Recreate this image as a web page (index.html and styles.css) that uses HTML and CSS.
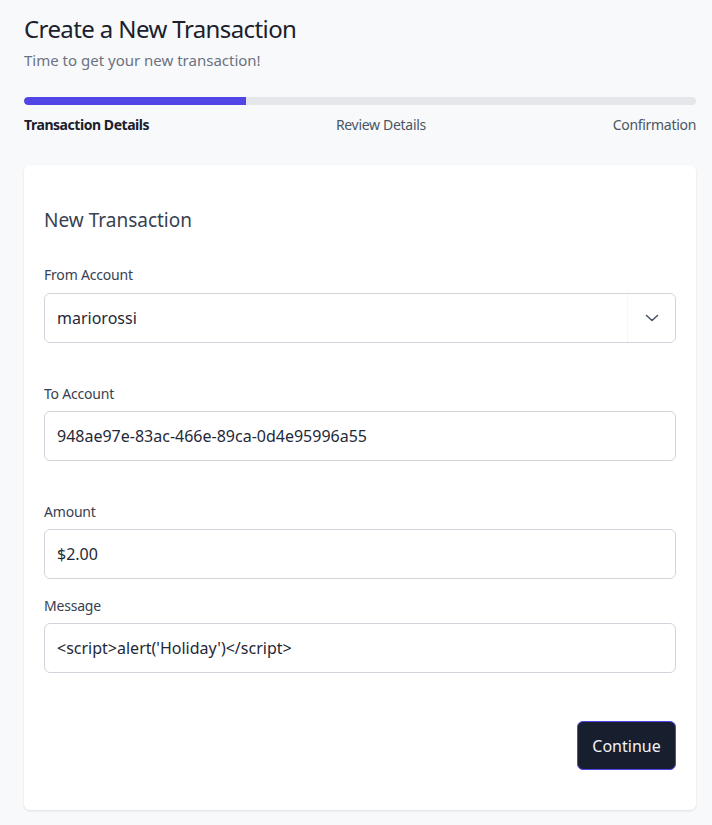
FILE: index.html
```html
<!DOCTYPE html>
<html>
<head>
<meta charset="utf-8">
<link rel="stylesheet" href="styles.css">
</head>
<body>
<main class="page">
  <header class="head">
    <h1 class="title">Create a New Transaction</h1>
    <p class="subtitle">Time to get your new transaction!</p>
  </header>
  <div class="progress"><div class="progress-fill" style="width:33%"></div></div>
  <div class="steps">
    <span class="step active">Transaction Details</span>
    <span class="step">Review Details</span>
    <span class="step">Confirmation</span>
  </div>
  <section class="card">
    <h2 class="card-title">New Transaction</h2>
    <div class="field gap-lg">
      <label class="label">From Account</label>
      <div class="select">
        <span class="select-value">mariorossi</span>
        <span class="select-arrow">
          <svg width="16" height="16" viewBox="0 0 16 16" fill="none" stroke="#4b5563" stroke-width="1.6" stroke-linecap="round" stroke-linejoin="round"><path d="M2.5 5.5 8 10.5 13.5 5.5"/></svg>
        </span>
      </div>
    </div>
    <div class="field gap-lg">
      <label class="label">To Account</label>
      <div class="input">948ae97e-83ac-466e-89ca-0d4e95996a55</div>
    </div>
    <div class="field gap-sm">
      <label class="label">Amount</label>
      <div class="input">$2.00</div>
    </div>
    <div class="field">
      <label class="label">Message</label>
      <div class="input">&lt;script&gt;alert('Holiday')&lt;/script&gt;</div>
    </div>
    <div class="actions">
      <button class="btn">Continue</button>
    </div>
  </section>
</main>
</body>
</html>
```
FILE: styles.css
```css
* { box-sizing: border-box; }
html, body { margin: 0; padding: 0; }
body {
  background: #f8f9fb;
  font-family: "Noto Sans", "Open Sans", sans-serif;
  color: #1f2937;
}
.page { padding: 14px 16px 14px 24px; }
.head { margin: 0; }
.title {
  margin: 0;
  font-size: 24px;
  font-weight: 400;
  line-height: 30px;
  letter-spacing: -0.6px;
  color: #1a202c;
}
.subtitle {
  margin: 6px 0 0;
  font-size: 15px;
  line-height: 20px;
  color: #6b7280;
}
.progress {
  margin-top: 27px;
  height: 8px;
  border-radius: 4px;
  background: #e5e7eb;
  overflow: hidden;
}
.progress-fill { height: 100%; background: #4f46e5; border-radius: 4px 0 0 4px; }
.steps {
  display: flex;
  justify-content: space-between;
  margin-top: 10px;
  font-size: 14px;
  line-height: 20px;
  letter-spacing: -0.3px;
  color: #4b5563;
}
.step.active { font-weight: 700; color: #1a202c; letter-spacing: -0.45px; }
.card {
  margin-top: 30px;
  background: #fff;
  border-radius: 6px;
  box-shadow: 0 1px 3px rgba(0,0,0,0.08), 0 1px 2px rgba(0,0,0,0.04);
  padding: 41px 20px 40px 20px;
}
.card-title {
  margin: 0 0 31px;
  font-size: 19px;
  font-weight: 400;
  line-height: 28px;
  color: #374151;
}
.field { display: flex; flex-direction: column; margin-bottom: 17px; }
.field.gap-lg { margin-bottom: 41px; }
.field.gap-sm { margin-bottom: 17px; }
.label {
  font-size: 14px;
  line-height: 20px;
  letter-spacing: -0.2px;
  color: #374151;
  margin-bottom: 7px;
}
.input, .select {
  height: 50px;
  border: 1px solid #d1d5db;
  border-radius: 6px;
  display: flex;
  align-items: center;
  font-size: 16px;
  color: #1f2937;
  background: #fff;
}
.select { margin-top: 1px; }
.input { padding: 0 12px; }
.select-value { flex: 1; padding: 0 12px; height: 100%; display: flex; align-items: center; border-right: 1px solid #f6f7f8; }
.select-arrow { width: 47px; display: flex; justify-content: center; align-items: center; }
.actions { display: flex; justify-content: flex-end; margin-top: 48px; }
.btn {
  font-family: "Noto Sans", "Open Sans", sans-serif;
  font-size: 16px;
  color: #f3f4f6;
  background: #171e2e;
  border: 1px solid #4f46e5;
  border-radius: 6px;
  width: 99px;
  height: 49px;
  padding: 0;
}
```
